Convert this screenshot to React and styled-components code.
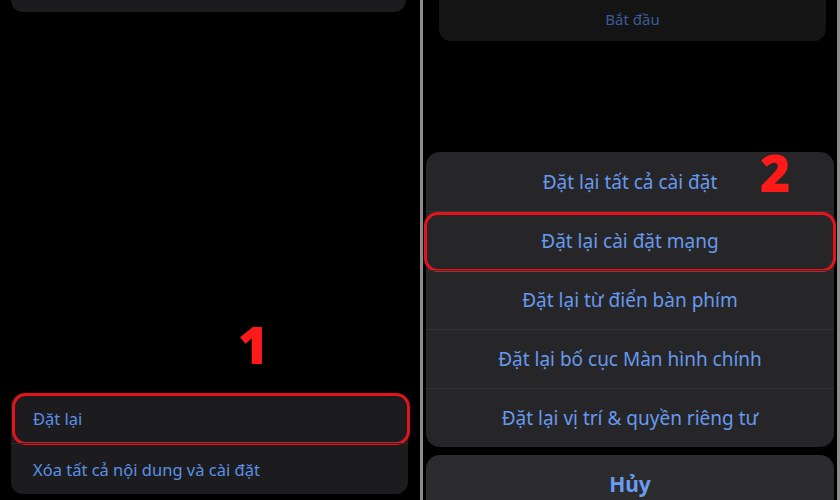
import styled, { createGlobalStyle } from 'styled-components';

const Global = createGlobalStyle`
  html, body {
    margin: 0;
    padding: 0;
    background: #000;
  }
  body {
    font-family: 'Noto Sans', 'Inter', sans-serif;
  }
`;

const Page = styled.div`
  display: flex;
  width: 840px;
  height: 500px;
  overflow: hidden;
  background: #000;
`;

const Panel = styled.div`
  position: relative;
  display: flex;
  flex-direction: column;
  width: ${(p) => p.w}px;
  height: 100%;
  background: #000;
  overflow: hidden;
  & > * {
    flex-shrink: 0;
  }
`;

const Divider = styled.div`
  width: 3px;
  height: 100%;
  background: #8c8c8c;
`;

const TopCard = styled.div`
  height: ${(p) => p.h}px;
  margin: 0 ${(p) => p.mr}px 0 ${(p) => p.ml}px;
  background: ${(p) => p.bg};
  border-radius: 0 0 12px 12px;
  display: flex;
  align-items: flex-end;
  justify-content: center;
`;

const DimText = styled.div`
  color: #3b5c99;
  font-size: 15px;
  padding-bottom: 12px;
`;

const ListCard = styled.div`
  margin: auto 12px 6px 11px;
  background: #1c1c1e;
  border-radius: 12px;
`;

const ListRow = styled.div`
  position: relative;
  height: 50px;
  display: flex;
  align-items: center;
  padding-left: 22px;
  color: #5b8fe8;
  font-size: 16.5px;
  & + & {
    border-top: 1px solid #2a2a2c;
  }
`;

const Highlight = styled.div`
  position: absolute;
  left: ${(p) => p.l}px;
  right: ${(p) => p.r}px;
  top: ${(p) => p.t}px;
  bottom: ${(p) => p.b}px;
  border: 3px solid #e3141c;
  border-radius: 14px;
  pointer-events: none;
`;

const Step = styled.div`
  position: absolute;
  left: ${(p) => p.x}px;
  top: ${(p) => p.y}px;
  color: #ff1a1a;
  font-family: 'Open Sans', 'Noto Sans', sans-serif;
  font-weight: 800;
  font-size: 52px;
  line-height: 1;
`;

const Sheet = styled.div`
  margin: 111px 3px 0 3px;
  background: #262628;
  border-radius: 14px;
`;

const SheetRow = styled.div`
  position: relative;
  height: 59px;
  display: flex;
  align-items: center;
  justify-content: center;
  color: #6699ee;
  font-size: 19px;
  & + & {
    border-top: 1px solid #323234;
    height: 58px;
  }
`;

const Cancel = styled.div`
  margin: 8px 3px 0 3px;
  height: 60px;
  background: #2c2c2e;
  border-radius: 14px 14px 0 0;
  display: flex;
  justify-content: center;
  padding-top: 15px;
  box-sizing: border-box;
  color: #6a9cf2;
  font-size: 21px;
  font-weight: 700;
`;

const sheetItems = [
  'Đặt lại tất cả cài đặt',
  'Đặt lại cài đặt mạng',
  'Đặt lại từ điển bàn phím',
  'Đặt lại bố cục Màn hình chính',
  'Đặt lại vị trí & quyền riêng tư',
];

export default function App() {
  return (
    <>
      <Global />
      <Page>
        <Panel w={420}>
          <TopCard h={12} ml={11} mr={14} bg="#1c1c1e" />
          <Step x={238} y={318}>1</Step>
          <ListCard>
            <ListRow>
              Đặt lại
              <Highlight l={1} r={-2} t={0} b={-2} />
            </ListRow>
            <ListRow>Xóa tất cả nội dung và cài đặt</ListRow>
          </ListCard>
        </Panel>
        <Divider />
        <Panel w={414}>
          <TopCard h={41} ml={16} mr={11} bg="#141414">
            <DimText>Bắt đầu</DimText>
          </TopCard>
          <Step x={337} y={146}>2</Step>
          <Sheet>
            {sheetItems.map((t, i) => (
              <SheetRow key={t}>
                {t}
                {i === 1 && <Highlight l={-2} r={-2} t={0} b={-2} />}
              </SheetRow>
            ))}
          </Sheet>
          <Cancel>Hủy</Cancel>
        </Panel>
        <Divider />
      </Page>
    </>
  );
}
